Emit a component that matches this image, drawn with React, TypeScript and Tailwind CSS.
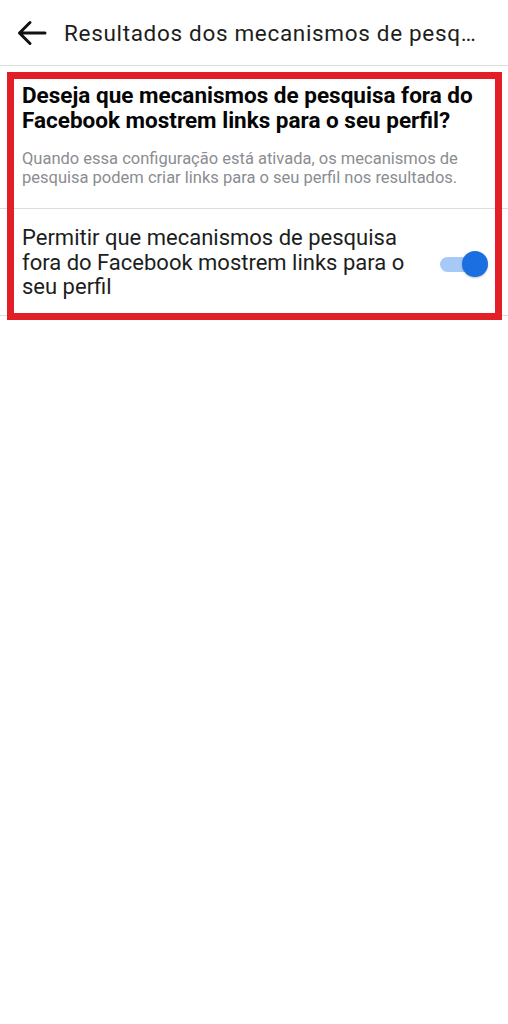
import React from "react";

export default function App() {
  return (
    <div className="relative w-[508px] min-h-[1024px] bg-white" style={{ fontFamily: "Roboto, 'Liberation Sans', sans-serif" }}>
      <div className="h-[66px] flex items-center border-b border-[#dadde1]">
        <svg width="30" height="26" viewBox="0 0 30 26" className="ml-[17px] shrink-0">
          <path d="M2.5 13 H28 M13 2.5 L2.5 13 L13 23.5" fill="none" stroke="#111" strokeWidth="3" strokeLinecap="round" strokeLinejoin="round" />
        </svg>
        <div className="ml-[17px] w-[418px] truncate text-[22.5px] tracking-[0.03em] leading-[28px] text-[#1c1e21]">
          Resultados dos mecanismos de pesquisa
        </div>
      </div>

      <div className="px-[22px] pt-[17px] pb-[21px] border-b border-[#dadde1]">
        <div className="text-[22.5px] leading-[25px] font-bold text-[#050505]">
          Deseja que mecanismos de pesquisa fora do Facebook mostrem links para o seu perfil?
        </div>
        <div className="mt-[16px] text-[16.5px] leading-[19px] text-[#8a8d91]">
          Quando essa configuração está ativada, os mecanismos de pesquisa podem criar links para o seu perfil nos resultados.
        </div>
      </div>

      <div className="flex items-center justify-between pl-[22px] pr-[20px] pt-[17px] pb-[15px] border-b border-[#dadde1]">
        <div className="w-[395px] text-[22px] leading-[24.5px] text-[#1c1e21]">
          Permitir que mecanismos de pesquisa fora do Facebook mostrem links para o seu perfil
        </div>
        <div className="relative w-[50px] h-[26px] mt-[2px] shrink-0">
          <div className="absolute left-[2px] right-[4px] top-[6px] h-[15px] rounded-full bg-[#a6c9f7]" />
          <div className="absolute right-0 top-0 w-[26px] h-[26px] rounded-full bg-[#1b6fe0] shadow-[0_1px_2px_rgba(0,0,0,0.25)]" />
        </div>
      </div>

      <div className="absolute left-[7px] top-[72px] w-[495px] h-[248px] border-[7px] border-[#e21f26] pointer-events-none" />
    </div>
  );
}
